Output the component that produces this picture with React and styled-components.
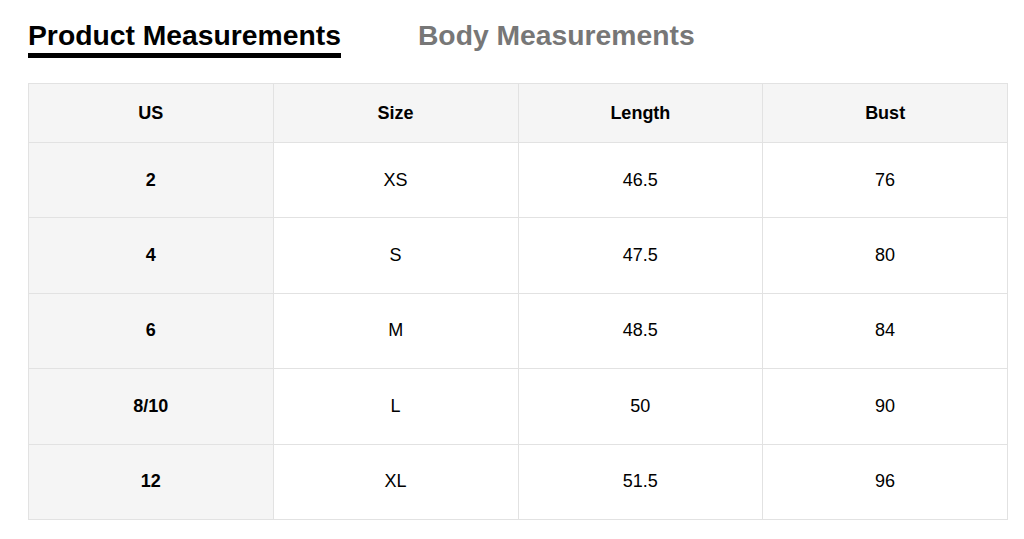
import React from "react";
import styled, { createGlobalStyle } from "styled-components";

const Global = createGlobalStyle`
  html, body { margin: 0; padding: 0; background: #fff; }
  body { font-family: "Liberation Sans", Arial, sans-serif; color: #000; }
`;

const Page = styled.div`
  padding: 17px 16px 0 28px;
`;

const Tabs = styled.div`
  display: flex;
  gap: 77px;
  height: 66px;
`;

const Tab = styled.div`
  font-size: 28.3px;
  font-weight: 700;
  line-height: 36px;
  color: ${p => (p.$active ? "#000" : "#777")};
  border-bottom: 5px solid ${p => (p.$active ? "#000" : "transparent")};
  box-sizing: border-box;
  height: 41px;
`;

const Table = styled.table`
  width: 980px;
  border-collapse: collapse;
  table-layout: fixed;
  font-size: 18px;
`;

const Th = styled.th`
  height: 58px;
  padding: 0;
  background: #f5f5f5;
  border: 1px solid #e2e2e2;
  font-weight: 700;
  text-align: center;
`;

const Td = styled.td`
  height: 74.4px;
  padding: 0;
  border: 1px solid #e2e2e2;
  text-align: center;
  background: ${p => (p.$first ? "#f5f5f5" : "#fff")};
  font-weight: ${p => (p.$first ? 700 : 400)};
`;

const rows = [
  ["2", "XS", "46.5", "76"],
  ["4", "S", "47.5", "80"],
  ["6", "M", "48.5", "84"],
  ["8/10", "L", "50", "90"],
  ["12", "XL", "51.5", "96"],
];

export default function App() {
  return (
    <Page>
      <Global />
      <Tabs>
        <Tab $active>Product Measurements</Tab>
        <Tab>Body Measurements</Tab>
      </Tabs>
      <Table>
        <thead>
          <tr>
            {["US", "Size", "Length", "Bust"].map(h => (
              <Th key={h}>{h}</Th>
            ))}
          </tr>
        </thead>
        <tbody>
          {rows.map(r => (
            <tr key={r[0]}>
              {r.map((c, i) => (
                <Td key={i} $first={i === 0}>{c}</Td>
              ))}
            </tr>
          ))}
        </tbody>
      </Table>
    </Page>
  );
}
